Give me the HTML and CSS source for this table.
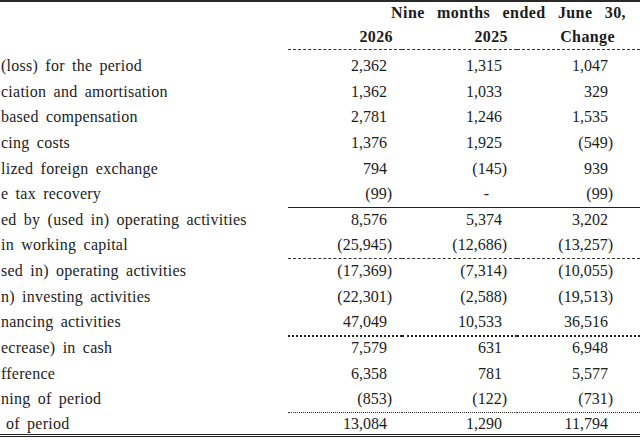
FILE: index.html
```html
<!DOCTYPE html>
<html>
<head>
<meta charset="utf-8">
<link rel="stylesheet" href="styles.css">
</head>
<body>
<div class="sheet">
  <div class="head">
    <div class="row h1"><div class="cell"></div><div class="cell period">Nine months ended June 30,</div></div>
    <div class="row h2"><div class="cell"></div><div class="cell yr">2026</div><div class="cell yr">2025</div><div class="cell yr chg">Change</div></div>
  </div>
  <div class="body">
    <div class="row"><div class="cell lbl">(loss) for the period</div><div class="cell num"><span class="p">2,362</span></div><div class="cell num"><span class="p">1,315</span></div><div class="cell num"><span class="p">1,047</span></div></div>
    <div class="row"><div class="cell lbl">ciation and amortisation</div><div class="cell num"><span class="p">1,362</span></div><div class="cell num"><span class="p">1,033</span></div><div class="cell num"><span class="p">329</span></div></div>
    <div class="row"><div class="cell lbl">based compensation</div><div class="cell num"><span class="p">2,781</span></div><div class="cell num"><span class="p">1,246</span></div><div class="cell num"><span class="p">1,535</span></div></div>
    <div class="row"><div class="cell lbl">cing costs</div><div class="cell num"><span class="p">1,376</span></div><div class="cell num"><span class="p">1,925</span></div><div class="cell num">(549)</div></div>
    <div class="row"><div class="cell lbl">lized foreign exchange</div><div class="cell num"><span class="p">794</span></div><div class="cell num">(145)</div><div class="cell num"><span class="p">939</span></div></div>
    <div class="row rule-solid"><div class="cell lbl">e tax recovery</div><div class="cell num">(99)</div><div class="cell num dash">-</div><div class="cell num">(99)</div></div>
    <div class="row"><div class="cell lbl">ed by (used in) operating activities</div><div class="cell num"><span class="p">8,576</span></div><div class="cell num"><span class="p">5,374</span></div><div class="cell num"><span class="p">3,202</span></div></div>
    <div class="row rule-dash"><div class="cell lbl">in working capital</div><div class="cell num">(25,945)</div><div class="cell num">(12,686)</div><div class="cell num">(13,257)</div></div>
    <div class="row"><div class="cell lbl">sed in) operating activities</div><div class="cell num">(17,369)</div><div class="cell num">(7,314)</div><div class="cell num">(10,055)</div></div>
    <div class="row"><div class="cell lbl">n) investing activities</div><div class="cell num">(22,301)</div><div class="cell num">(2,588)</div><div class="cell num">(19,513)</div></div>
    <div class="row rule-thick"><div class="cell lbl">nancing activities</div><div class="cell num"><span class="p">47,049</span></div><div class="cell num"><span class="p">10,533</span></div><div class="cell num"><span class="p">36,516</span></div></div>
    <div class="row"><div class="cell lbl">ecrease) in cash</div><div class="cell num"><span class="p">7,579</span></div><div class="cell num"><span class="p">631</span></div><div class="cell num"><span class="p">6,948</span></div></div>
    <div class="row"><div class="cell lbl">fference</div><div class="cell num"><span class="p">6,358</span></div><div class="cell num"><span class="p">781</span></div><div class="cell num"><span class="p">5,577</span></div></div>
    <div class="row rule-dot"><div class="cell lbl">ning of period</div><div class="cell num">(853)</div><div class="cell num">(122)</div><div class="cell num">(731)</div></div>
    <div class="row last"><div class="cell lbl indent">of period</div><div class="cell num"><span class="p">13,084</span></div><div class="cell num"><span class="p">1,290</span></div><div class="cell num"><span class="p">11,794</span></div></div>
  </div>
</div>
</body>
</html>
```
FILE: styles.css
```css
html, body {
  margin: 0;
  padding: 0;
  background: #ffffff;
}

body {
  width: 640px;
  height: 440px;
  overflow: hidden;
  font-family: "Liberation Serif", "Times New Roman", serif;
  font-size: 16px;
  color: #1c1c1c;
}

.sheet {
  width: 640px;
  border-top: 2px solid #2a2a2a;
}

.row {
  display: grid;
  grid-template-columns: 288px 114px 115px 123px;
  height: 25.64px;
}

.cell {
  box-sizing: border-box;
  height: 100%;
  line-height: 25.64px;
  white-space: nowrap;
}

/* header */
.head .row {
  height: 24px;
}

.head .cell {
  line-height: 22px;
  font-weight: bold;
  letter-spacing: 0.4px;
}

.period {
  grid-column: 2 / 5;
  text-align: right;
  padding-right: 14px;
  word-spacing: 8px;
}

.h2 .cell + .cell {
  border-bottom: 1px dashed #333;
}

.yr {
  text-align: right;
  padding-right: 9px;
}

.chg {
  padding-right: 25px;
}

/* body */
.body {
  padding-top: 3px;
}

.lbl {
  padding-left: 1px;
  overflow: hidden;
  word-spacing: 3px;
  letter-spacing: 0.25px;
}

.indent {
  padding-left: 6px;
}

.num {
  text-align: right;
  padding-right: 10px;
}

.num:last-child {
  padding-right: 27px;
}

.p {
  padding-right: 5px;
}

.dash {
  padding-right: 28px;
}

.rule-solid .num { border-bottom: 1px solid #222; }
.rule-dash .num { border-bottom: 1px dashed #333; }
.rule-thick .num { border-bottom: 2px dotted #222; }
.rule-dot .num { border-bottom: 1px dotted #333; }

.last {
  border-bottom: 3px double #222;
  box-sizing: border-box;
}

.last .cell {
  line-height: 23px;
}
```
